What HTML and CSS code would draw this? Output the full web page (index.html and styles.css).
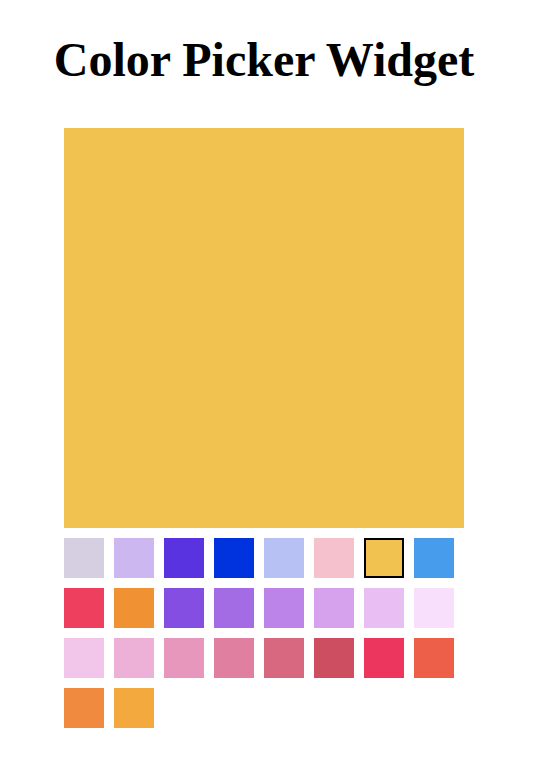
FILE: index.html
```html
<!DOCTYPE html>
<html lang="en">
<head>
  <meta charset="UTF-8">
  <meta name="viewport" content="width=device-width, initial-scale=1.0">
  <title>Color Picker Widget</title>
  <link rel="stylesheet" href="styles.css">
</head>
<body>
  <div class="picker">
    <h1 class="title">Color Picker Widget</h1>
    <div class="preview"></div>
    <div class="swatches">
      <div class="swatch" style="background: #d6cfe2"></div>
      <div class="swatch" style="background: #cdb7f0"></div>
      <div class="swatch" style="background: #5a33e0"></div>
      <div class="swatch" style="background: #0033dd"></div>
      <div class="swatch" style="background: #b7c1f3"></div>
      <div class="swatch" style="background: #f5c1cd"></div>
      <div class="swatch selected" style="background: #f2c250"></div>
      <div class="swatch" style="background: #479deb"></div>
      <div class="swatch" style="background: #ee405e"></div>
      <div class="swatch" style="background: #f09133"></div>
      <div class="swatch" style="background: #844ee2"></div>
      <div class="swatch" style="background: #a36be4"></div>
      <div class="swatch" style="background: #bc84e9"></div>
      <div class="swatch" style="background: #d6a1ed"></div>
      <div class="swatch" style="background: #e9bff3"></div>
      <div class="swatch" style="background: #f8dffb"></div>
      <div class="swatch" style="background: #f2c6ea"></div>
      <div class="swatch" style="background: #edb0d6"></div>
      <div class="swatch" style="background: #e797bb"></div>
      <div class="swatch" style="background: #e07f9f"></div>
      <div class="swatch" style="background: #d86780"></div>
      <div class="swatch" style="background: #cd4e60"></div>
      <div class="swatch" style="background: #ec365d"></div>
      <div class="swatch" style="background: #ee5f49"></div>
      <div class="swatch" style="background: #f08a3e"></div>
      <div class="swatch" style="background: #f3a93e"></div>
    </div>
  </div>
</body>
</html>
```

FILE: styles.css
```css
/* Basic styling */
body {
  margin: 0;
  font-family: "Liberation Serif", "Times New Roman", serif;
  background: #fff;
}
.picker {
  width: 400px;
  margin-left: 64px;
  display: flex;
  flex-direction: column;
  align-items: center;
}
.title {
  font-size: 48px;
  font-weight: bold;
  margin: 32px 0 41px;
  white-space: nowrap;
}
.preview {
  width: 400px;
  height: 400px;
  background: #f2c250;
}
.swatches {
  width: 400px;
  display: grid;
  grid-template-columns: repeat(8, 40px);
  gap: 10px;
  margin-top: 10px;
}
.swatch {
  width: 40px;
  height: 40px;
  box-sizing: border-box;
  cursor: pointer;
}
.swatch.selected {
  border: 2px solid #000;
}
```
